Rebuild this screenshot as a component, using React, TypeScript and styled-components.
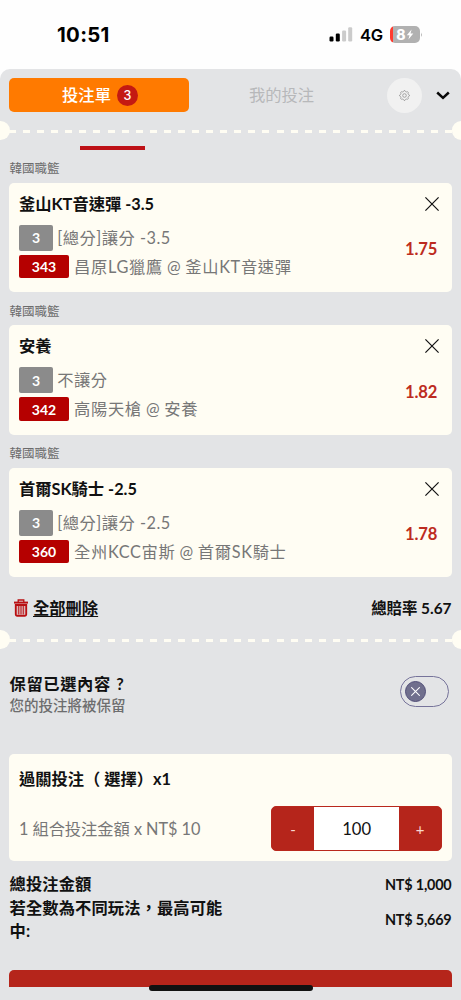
import React from 'react';
import styled, { createGlobalStyle } from 'styled-components';

const GlobalStyle = createGlobalStyle`
  * { box-sizing: border-box; }
  body {
    margin: 0;
    background: #fff;
    font-family: Lato, 'Noto Sans CJK TC', sans-serif;
    font-size: 16.3px;
    color: #111;
  }
  button { font-family: inherit; border: 0; padding: 0; margin: 0; }
`;

const Screen = styled.main`
  width: 461px;
  height: 1000px;
  overflow: hidden;
  position: relative;
  display: flex;
  flex-direction: column;
  background: #fefefe;
`;

const StatusBar = styled.header`
  height: 69px;
  flex: none;
  display: flex;
  align-items: center;
  justify-content: space-between;
  padding: 0 38px 0 57px;
  font-family: Inter, sans-serif;
  color: #000;
`;

const Clock = styled.span`
  font-size: 20.4px;
  font-weight: 700;
  letter-spacing: 0.3px;
  line-height: 24px;
`;

const StatusIcons = styled.div`
  display: flex;
  align-items: center;
`;

const Network = styled.span`
  font-size: 16.5px;
  font-weight: 600;
  letter-spacing: -0.2px;
  margin: 1px 7px 0 7px;
  line-height: 20px;
`;

const Battery = styled.span`
  width: 30px;
  height: 16.5px;
  border-radius: 5px;
  background: linear-gradient(90deg, #ff3b30 2.6px, #b1b1b1 2.6px);
  display: flex;
  align-items: center;
  justify-content: center;
  color: #fff;
  font-size: 14px;
  font-weight: 800;
`;

const Panel = styled.section`
  flex: 1;
  border-radius: 10px 10px 0 0;
  background: #e3e4e6;
  display: flex;
  flex-direction: column;
`;

const Tabs = styled.nav`
  display: flex;
  align-items: center;
  height: 52px;
  padding: 0 10px 0 9px;
`;

const Tab = styled.button<{ $active?: boolean }>`
  width: ${p => (p.$active ? '180px' : '185px')};
  height: 34px;
  padding-bottom: ${p => (p.$active ? 0 : 2)}px;
  display: flex;
  align-items: center;
  justify-content: center;
  gap: 6px;
  border-radius: 5px;
  background: ${p => (p.$active ? '#ff7a00' : 'transparent')};
  color: ${p => (p.$active ? '#fff' : '#b7b8ba')};
  font-size: 16.3px;
  font-weight: ${p => (p.$active ? 500 : 400)};
`;

const TabText = styled.span`
  padding: 0 0 2px 2px;
`;

const Count = styled.span`
  width: 21px;
  height: 21px;
  border-radius: 50%;
  background: #c41a12;
  font: 500 12.5px/21px Inter, sans-serif;
`;

const Settings = styled.button`
  width: 35px;
  height: 35px;
  margin-left: 13px;
  border-radius: 50%;
  background: #f1f1f1;
  display: grid;
  place-items: center;
`;

const Collapse = styled.button`
  background: none;
  margin-left: 14px;
  padding-top: 1px;
  display: grid;
  place-items: center;
`;

const Divider = styled.div`
  height: 19px;
  flex: none;
  display: flex;
  align-items: center;
  justify-content: space-between;
  background: repeating-linear-gradient(90deg, #fffdf3 0 7px, transparent 7px 14.08px) 9px 9px / 443px 3px no-repeat;
  &::before, &::after {
    content: '';
    width: 9.5px;
    height: 19px;
    background: #fffdf3;
  }
  &::before { border-radius: 0 10px 10px 0; }
  &::after { border-radius: 10px 0 0 10px; }
`;

const Underline = styled.div`
  width: 65.5px;
  height: 4px;
  margin: 5.6px 0 0 79.7px;
  background: #be1117;
`;

const Bets = styled.div`
  display: flex;
  flex-direction: column;
  padding: 0 9.4px;
`;

const League = styled.h2`
  margin: 0;
  height: 33px;
  padding-top: 9.9px;
  font-size: 12.5px;
  line-height: 20px;
  font-weight: 400;
  color: #6b6b6c;
`;

const Card = styled.article`
  border-radius: 5px;
  background: #fffdf3;
  padding: 0 9.5px;
`;

const BetCard = styled(Card)`
  height: 109.5px;
  display: flex;
  justify-content: space-between;
`;

const BetInfo = styled.div`
  display: flex;
  flex-direction: column;
`;

const BetTitle = styled.h3`
  margin: 0;
  height: 42px;
  line-height: 41.5px;
  font-size: 16.3px;
  font-weight: 700;
`;

const Line = styled.div`
  height: 26px;
  margin-bottom: 3px;
  display: flex;
  align-items: center;
  gap: 4.4px;
  color: #777;
  letter-spacing: 0.5px;
  white-space: nowrap;
`;

const LineText = styled.span`
  padding-bottom: 2px;
`;

const MatchText = styled(LineText)`
  padding-left: 0.8px;
  letter-spacing: 0.65px;
  word-spacing: -0.7px;
`;

const Tag = styled.span<{ $code?: boolean }>`
  width: ${p => (p.$code ? 50 : 34)}px;
  height: ${p => (p.$code ? 23.5 : 26)}px;
  border-radius: 2px;
  background: ${p => (p.$code ? '#b50000' : '#8b8b8b')};
  color: #fff;
  font-size: 14px;
  font-weight: 700;
  letter-spacing: -0.1px;
  display: grid;
  place-items: center;
`;

const BetSide = styled.div`
  display: flex;
  flex-direction: column;
  align-items: flex-end;
  padding: 14px 3px 0 0;
`;

const Odds = styled.strong`
  margin: 28.9px 2px 0 0;
  color: #bd2b20;
  font-size: 16.6px;
  line-height: 20px;
  letter-spacing: -0.2px;
`;

const Summary = styled.div`
  height: 53px;
  display: flex;
  align-items: center;
  justify-content: space-between;
  padding: 8px 9.5px 0 14px;
  font-weight: 700;
`;

const DeleteAll = styled.button`
  background: none;
  color: #111;
  display: flex;
  align-items: center;
  gap: 5px;
  font-size: 16.3px;
  font-weight: 700;
  line-height: 24px;
  span { text-decoration: underline; text-underline-offset: 2px; }
`;

const TotalOdds = styled.span`
  font-size: 15.4px;
  padding-bottom: 1px;
`;

const Keep = styled.div`
  height: 105px;
  display: flex;
  justify-content: space-between;
  padding: 23px 12px 0 9.5px;
`;

const KeepTitle = styled.div`
  font-weight: 700;
  line-height: 23px;
  letter-spacing: 0.6px;
  word-spacing: 1px;
`;

const KeepNote = styled.div`
  font-size: 14.5px;
  line-height: 22px;
  color: #6d6d6e;
  font-weight: 500;
`;

const Toggle = styled.button`
  width: 49px;
  height: 31px;
  margin-top: 3.6px;
  border: 1px solid #76739a;
  border-radius: 16px;
  background: transparent;
  display: flex;
  align-items: center;
  padding-left: 4px;
`;

const Knob = styled.span`
  width: 21px;
  height: 21px;
  border-radius: 50%;
  border: 1px solid #514e78;
  background: #706f8d;
  display: grid;
  place-items: center;
`;

const ParlayCard = styled(Card)`
  height: 107px;
  margin: 0 9.4px;
`;

const ParlayTitle = styled.h3`
  margin: 0;
  height: 52px;
  line-height: 50px;
  font-size: 16.3px;
  font-weight: 700;
`;

const StakeRow = styled.div`
  height: 45px;
  display: flex;
  align-items: center;
  justify-content: space-between;
  color: #777;
`;

const StakeText = styled.span`
  letter-spacing: -0.05px;
  padding-bottom: 1px;
`;

const Stepper = styled.div`
  width: 171px;
  height: 45px;
  border: 1px solid #b9281d;
  border-radius: 5px;
  overflow: hidden;
  display: grid;
  grid-template-columns: 42px 1fr 42px;
  background: #b5251b;
`;

const StepButton = styled.button`
  background: #b5251b;
  color: #f8d8d0;
  font-size: 15px;
`;

const Amount = styled.div`
  background: #fff;
  color: #111;
  font-size: 16.6px;
  display: grid;
  place-items: center;
`;

const Totals = styled.div`
  height: 109px;
  padding: 10.5px 9.5px 0;
  font-weight: 700;
`;

const TotalRow = styled.div`
  display: flex;
  align-items: center;
  justify-content: space-between;
  line-height: 23.3px;
`;

const TotalLabel = styled.span`
  width: 220px;
  letter-spacing: 0.1px;
`;

const TotalValue = styled.span`
  padding-top: 1px;
  font-size: 14.4px;
  letter-spacing: -0.2px;
`;

const Submit = styled.div`
  height: 17px;
  margin: 0 9.4px;
  border-radius: 5px 5px 0 0;
  background: #b5251b;
`;

const HomeIndicator = styled.div`
  position: absolute;
  left: 148.5px;
  top: 984.5px;
  width: 164.5px;
  height: 6px;
  border-radius: 3px;
  background: #111;
`;

const bets = [
  { title: '釜山KT音速彈 -3.5', market: '[總分]讓分 -3.5', code: '343', match: '昌原LG獵鷹 @ 釜山KT音速彈', odds: '1.75' },
  { title: '安養', market: '不讓分', code: '342', match: '高陽天槍 @ 安養', odds: '1.82' },
  { title: '首爾SK騎士 -2.5', market: '[總分]讓分 -2.5', code: '360', match: '全州KCC宙斯 @ 首爾SK騎士', odds: '1.78' },
];

const SignalIcon = () => (
  <svg width="24" height="15" viewBox="0 0 24 15">
    <rect x="0.5" y="9.5" width="4" height="5" rx="1.2" fill="#000" />
    <rect x="6.8" y="6.5" width="4" height="8" rx="1.2" fill="#000" />
    <rect x="13.1" y="3.5" width="4" height="11" rx="1.2" fill="#cbcbcb" />
    <rect x="19.2" y="0.3" width="4" height="14.2" rx="1.2" fill="#cbcbcb" />
  </svg>
);

const BoltIcon = () => (
  <svg width="8" height="11" viewBox="0 0 8 11">
    <path d="M5.6.5.8 6.2h2.7l-1.1 4.3 4.9-5.9H4.5z" fill="#fff" />
  </svg>
);

const gearPath = Array.from({ length: 32 }, (_, i) => {
  const angle = ((i - 0.5) * Math.PI) / 16;
  const radius = i % 4 < 2 ? 4.9 : 4;
  return `${i ? 'L' : 'M'}${(5.5 + radius * Math.cos(angle)).toFixed(2)} ${(5.5 + radius * Math.sin(angle)).toFixed(2)}`;
}).join('') + 'Z';

const GearIcon = () => (
  <svg width="11" height="11" viewBox="0 0 11 11" fill="none" stroke="#8c8c8c" strokeWidth="0.75" strokeLinejoin="round">
    <path d={gearPath} />
    <circle cx="5.5" cy="5.5" r="1.8" />
  </svg>
);

const ChevronIcon = () => (
  <svg width="14" height="9" viewBox="0 0 14 9">
    <path d="M1.2 1.5 7 6.8l5.8-5.3" fill="none" stroke="#080808" strokeWidth="2.5" />
  </svg>
);

const CloseIcon = ({ size, color, width }: { size: number; color: string; width: number }) => (
  <svg width={size} height={size} viewBox="0 0 14 14">
    <path d="M.4.4l13.2 13.2M13.6.4.4 13.6" stroke={color} strokeWidth={width} />
  </svg>
);

const TrashIcon = () => (
  <svg width="14" height="18" viewBox="0 0 14 18" fill="none" stroke="#b90f12">
    <path d="M4.2 3V1h5.6v2" strokeWidth="1.3" />
    <path d="M0 3.6h14" strokeWidth="2" />
    <path d="M1.8 6v9.5q0 1.2 1.2 1.2h8q1.2 0 1.2-1.2V6z" strokeWidth="1.9" />
    <path d="M4.3 7V15.5M6.1 7V15.5M7.9 7V15.5M9.7 7V15.5" strokeWidth="1" />
  </svg>
);

export default function App() {
  return (
    <>
      <GlobalStyle />
      <Screen>
        <StatusBar>
          <Clock>10:51</Clock>
          <StatusIcons>
            <SignalIcon />
            <Network>4G</Network>
            <Battery>8<BoltIcon /></Battery>
            <svg width="3" height="6" viewBox="0 0 3 6"><path d="M1 .5q1.8 2.2 0 4.5z" fill="#b1b1b1" /></svg>
          </StatusIcons>
        </StatusBar>
        <Panel>
          <Tabs>
            <Tab $active><TabText>投注單</TabText><Count>3</Count></Tab>
            <Tab>我的投注</Tab>
            <Settings><GearIcon /></Settings>
            <Collapse><ChevronIcon /></Collapse>
          </Tabs>
          <Divider />
          <Underline />
          <Bets>
            {bets.map(bet => (
              <React.Fragment key={bet.code}>
                <League>韓國職籃</League>
                <BetCard>
                  <BetInfo>
                    <BetTitle>{bet.title}</BetTitle>
                    <Line><Tag>3</Tag><LineText>{bet.market}</LineText></Line>
                    <Line><Tag $code>{bet.code}</Tag><MatchText>{bet.match}</MatchText></Line>
                  </BetInfo>
                  <BetSide>
                    <CloseIcon size={14} color="#111" width={1.2} />
                    <Odds>{bet.odds}</Odds>
                  </BetSide>
                </BetCard>
              </React.Fragment>
            ))}
          </Bets>
          <Summary>
            <DeleteAll><TrashIcon /><span>全部刪除</span></DeleteAll>
            <TotalOdds>總賠率 5.67</TotalOdds>
          </Summary>
          <Divider />
          <Keep>
            <div>
              <KeepTitle>保留已選內容 ?</KeepTitle>
              <KeepNote>您的投注將被保留</KeepNote>
            </div>
            <Toggle><Knob><CloseIcon size={9} color="#fff" width={1.6} /></Knob></Toggle>
          </Keep>
          <ParlayCard>
            <ParlayTitle>過關投注（ 選擇）x1</ParlayTitle>
            <StakeRow>
              <StakeText>1 組合投注金額 x NT$ 10</StakeText>
              <Stepper>
                <StepButton>-</StepButton>
                <Amount>100</Amount>
                <StepButton>+</StepButton>
              </Stepper>
            </StakeRow>
          </ParlayCard>
          <Totals>
            <TotalRow>
              <TotalLabel>總投注金額</TotalLabel>
              <TotalValue>NT$ 1,000</TotalValue>
            </TotalRow>
            <TotalRow>
              <TotalLabel>若全數為不同玩法，最高可能中:</TotalLabel>
              <TotalValue>NT$ 5,669</TotalValue>
            </TotalRow>
          </Totals>
          <Submit />
        </Panel>
        <HomeIndicator />
      </Screen>
    </>
  );
}
